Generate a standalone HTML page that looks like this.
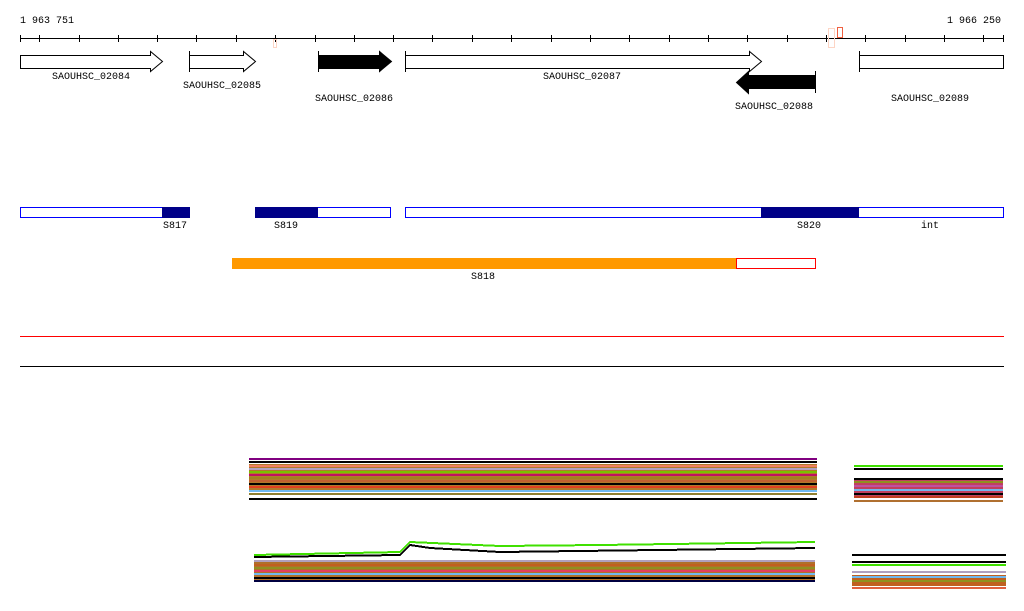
<!DOCTYPE html>
<html><head><meta charset="utf-8"><style>
html,body{margin:0;padding:0;background:#fff;width:1024px;height:611px;overflow:hidden}
svg text{font-family:"Liberation Mono",monospace;font-size:10px;fill:#000}
</style></head><body>
<svg width="1024" height="611" viewBox="0 0 1024 611" xmlns="http://www.w3.org/2000/svg" shape-rendering="crispEdges">
<text x="20" y="23">1 963 751</text>
<text x="947" y="23">1 966 250</text>
<line x1="20" y1="38.5" x2="1004" y2="38.5" stroke="#000"/>
<g stroke="#000">
<line x1="20.5" y1="35" x2="20.5" y2="42"/><line x1="39.5" y1="35" x2="39.5" y2="42"/><line x1="79.5" y1="35" x2="79.5" y2="42"/><line x1="118.5" y1="35" x2="118.5" y2="42"/><line x1="157.5" y1="35" x2="157.5" y2="42"/><line x1="196.5" y1="35" x2="196.5" y2="42"/><line x1="236.5" y1="35" x2="236.5" y2="42"/><line x1="275.5" y1="35" x2="275.5" y2="42"/><line x1="315.5" y1="35" x2="315.5" y2="42"/><line x1="354.5" y1="35" x2="354.5" y2="42"/><line x1="393.5" y1="35" x2="393.5" y2="42"/><line x1="432.5" y1="35" x2="432.5" y2="42"/><line x1="472.5" y1="35" x2="472.5" y2="42"/><line x1="511.5" y1="35" x2="511.5" y2="42"/><line x1="551.5" y1="35" x2="551.5" y2="42"/><line x1="590.5" y1="35" x2="590.5" y2="42"/><line x1="629.5" y1="35" x2="629.5" y2="42"/><line x1="669.5" y1="35" x2="669.5" y2="42"/><line x1="708.5" y1="35" x2="708.5" y2="42"/><line x1="747.5" y1="35" x2="747.5" y2="42"/><line x1="787.5" y1="35" x2="787.5" y2="42"/><line x1="826.5" y1="35" x2="826.5" y2="42"/><line x1="865.5" y1="35" x2="865.5" y2="42"/><line x1="905.5" y1="35" x2="905.5" y2="42"/><line x1="944.5" y1="35" x2="944.5" y2="42"/><line x1="983.5" y1="35" x2="983.5" y2="42"/><line x1="1003.5" y1="35" x2="1003.5" y2="42"/>
</g>
<rect x="273.5" y="39.5" width="3" height="8" fill="none" stroke="#fdd5c5"/>
<rect x="828.5" y="28.5" width="6" height="19" fill="none" stroke="#fdd5c5"/>
<rect x="837.5" y="27.5" width="5" height="10" fill="none" stroke="#f06040"/>
<g stroke="#000" stroke-width="1" shape-rendering="auto">
<polygon points="20.5,55.5 150.5,55.5 150.5,51.5 162.5,61.5 150.5,71.5 150.5,68.5 20.5,68.5" fill="#fff"/>
<polygon points="189.5,55.5 243.5,55.5 243.5,51.5 255.5,61.5 243.5,71.5 243.5,68.5 189.5,68.5" fill="#fff"/>
<polygon points="318.5,55.5 379.5,55.5 379.5,51.5 391.5,61.5 379.5,71.5 379.5,68.5 318.5,68.5" fill="#000"/>
<polygon points="405.5,55.5 749.5,55.5 749.5,51.5 761.5,61.5 749.5,71.5 749.5,68.5 405.5,68.5" fill="#fff"/>
<polygon points="815.5,75.5 748.5,75.5 748.5,71.5 736.5,82.5 748.5,93.5 748.5,88.5 815.5,88.5" fill="#000"/>
<rect x="859.5" y="55.5" width="144" height="13" fill="#fff"/>
</g>
<g stroke="#000"><line x1="189.5" y1="51" x2="189.5" y2="72"/><line x1="318.5" y1="51" x2="318.5" y2="72"/><line x1="405.5" y1="51" x2="405.5" y2="72"/><line x1="815.5" y1="71" x2="815.5" y2="93"/><line x1="859.5" y1="51" x2="859.5" y2="72"/></g>
<text x="52" y="79">SAOUHSC_02084</text>
<text x="183" y="88">SAOUHSC_02085</text>
<text x="315" y="101">SAOUHSC_02086</text>
<text x="543" y="79">SAOUHSC_02087</text>
<text x="735" y="109">SAOUHSC_02088</text>
<text x="891" y="101">SAOUHSC_02089</text>

<g stroke="#0000ff" fill="#fff">
<rect x="20.5" y="207.5" width="169" height="10"/>
<rect x="255.5" y="207.5" width="135" height="10"/>
<rect x="405.5" y="207.5" width="598" height="10"/>
</g>
<rect x="162" y="207" width="28" height="11" fill="#000088"/>
<rect x="255" y="207" width="63" height="11" fill="#000088"/>
<rect x="761" y="207" width="98" height="11" fill="#000088"/>
<text x="163" y="228">S817</text><text x="274" y="228">S819</text><text x="797" y="228">S820</text><text x="921" y="228">int</text>
<rect x="232" y="258" width="505" height="11" fill="#ff9900"/>
<rect x="736.5" y="258.5" width="79" height="10" fill="#fff" stroke="#f00"/>
<text x="471" y="279">S818</text>
<line x1="20" y1="336.5" x2="1004" y2="336.5" stroke="#f00"/>
<line x1="20" y1="366.5" x2="1004" y2="366.5" stroke="#000"/>

<!-- block 1 -->
<g stroke-width="2">
<rect x="249" y="464" width="568" height="26" fill="#b07a2a"/>
<line x1="249" y1="459" x2="817" y2="459" stroke="#800080"/>
<line x1="249" y1="462" x2="817" y2="462" stroke="#000"/>
<line x1="249" y1="466" x2="817" y2="466" stroke="#f08060"/>
<line x1="249" y1="469" x2="817" y2="469" stroke="#b0a0c0"/>
<line x1="249" y1="472" x2="817" y2="472" stroke="#7ac000"/>
<line x1="249" y1="475" x2="817" y2="475" stroke="#c01060"/>
<line x1="249" y1="478" x2="817" y2="478" stroke="#a08020"/>
<line x1="249" y1="481" x2="817" y2="481" stroke="#c06030"/>
<line x1="249" y1="484" x2="817" y2="484" stroke="#000"/>
<line x1="249" y1="487" x2="817" y2="487" stroke="#e04020"/>
<line x1="249" y1="491" x2="817" y2="491" stroke="#70b8f0"/>
<line x1="249" y1="494" x2="817" y2="494" stroke="#908030"/>
<line x1="249" y1="499" x2="817" y2="499" stroke="#000"/>
</g>
<!-- block 2 -->
<g stroke-width="2">
<line x1="854" y1="466" x2="1003" y2="466" stroke="#40e000"/>
<line x1="854" y1="469" x2="1003" y2="469" stroke="#000"/>
<rect x="854" y="478" width="149" height="20" fill="#c04060"/>
<line x1="854" y1="479" x2="1003" y2="479" stroke="#000"/>
<line x1="854" y1="482" x2="1003" y2="482" stroke="#909020"/>
<line x1="854" y1="486" x2="1003" y2="486" stroke="#c050a0"/>
<line x1="854" y1="490" x2="1003" y2="490" stroke="#70b8f0"/>
<line x1="854" y1="494" x2="1003" y2="494" stroke="#000"/>
<line x1="854" y1="497" x2="1003" y2="497" stroke="#c04020"/>
<line x1="854" y1="501" x2="1003" y2="501" stroke="#b07030"/>
</g>
<!-- block 3 -->
<g stroke-width="2">
<polyline points="254,555 400,552 410,542 500,546 600,545 815,542" fill="none" stroke="#40e000"/>
<polyline points="254,557 400,555 410,545 430,548 500,552 815,548" fill="none" stroke="#000"/>
<rect x="254" y="560" width="561" height="20" fill="#b0702a"/>
<line x1="254" y1="561" x2="815" y2="561" stroke="#b0a0c0"/>
<line x1="254" y1="565" x2="815" y2="565" stroke="#c06020"/>
<line x1="254" y1="568" x2="815" y2="568" stroke="#909020"/>
<line x1="254" y1="571" x2="815" y2="571" stroke="#e04060"/>
<line x1="254" y1="574" x2="815" y2="574" stroke="#70b8f0"/>
<line x1="254" y1="578" x2="815" y2="578" stroke="#000"/>
<line x1="254" y1="581" x2="815" y2="581" stroke="#000040"/>
</g>
<!-- block 4 -->
<g stroke-width="2">
<line x1="852" y1="555" x2="1006" y2="555" stroke="#000"/>
<line x1="852" y1="562" x2="1006" y2="562" stroke="#000"/>
<line x1="852" y1="565" x2="1006" y2="565" stroke="#40e000"/>
<line x1="852" y1="572" x2="1006" y2="572" stroke="#b0a0c0"/>
<rect x="852" y="575" width="154" height="11" fill="#c06020"/>
<line x1="852" y1="577" x2="1006" y2="577" stroke="#70b8f0"/>
<line x1="852" y1="581" x2="1006" y2="581" stroke="#909020"/>
<line x1="852" y1="588" x2="1006" y2="588" stroke="#e06040"/>
</g>
</svg>
</body></html>
